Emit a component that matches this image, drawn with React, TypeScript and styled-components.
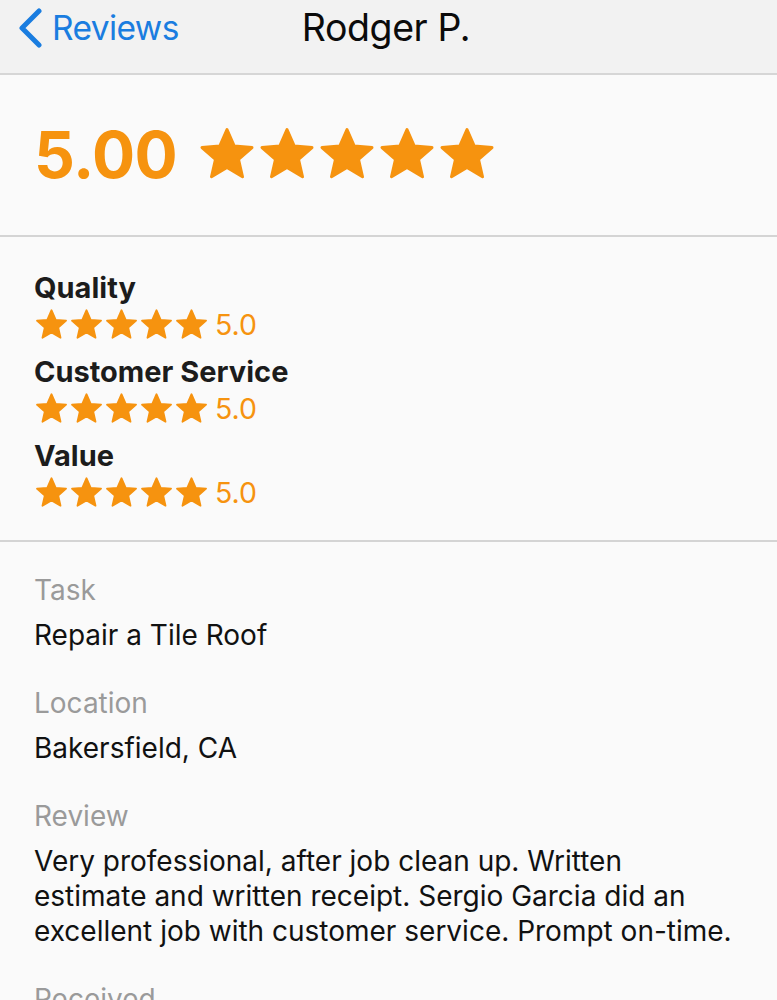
import styled, { createGlobalStyle } from "styled-components";

const Global = createGlobalStyle`
  html, body {
    margin: 0;
    padding: 0;
    background: #fafafa;
    font-family: "Inter", "Liberation Sans", sans-serif;
  }
`;

const ORANGE = "#f6930f";

const Page = styled.div`
  width: 777px;
  height: 1000px;
  overflow: hidden;
  background: #fafafa;
`;

const NavBar = styled.div`
  height: 73px;
  background: #f2f2f2;
  border-bottom: 2px solid #d6d6d6;
  display: flex;
  align-items: center;
`;

const Back = styled.div`
  display: flex;
  align-items: center;
  gap: 9px;
  padding-left: 17px;
  padding-bottom: 18px;
  color: #1a7de0;
  font-size: 33.5px;
  letter-spacing: -0.6px;
`;

const Title = styled.div`
  margin-left: 123px;
  padding-bottom: 18px;
  font-size: 37.5px;
  color: #0b0b0b;
  letter-spacing: -0.4px;
`;

const Section = styled.div<{ $pad: string }>`
  padding: ${(p) => p.$pad};
  border-bottom: 2px solid #d4d4d4;
`;

const Overall = styled.div`
  display: flex;
  align-items: center;
  gap: 20px;
  height: 60px;
`;

const BigScore = styled.div`
  font-size: 64px;
  font-weight: 700;
  color: ${ORANGE};
  letter-spacing: -0.5px;
`;

const Stars = styled.div<{ $gap: number }>`
  display: flex;
  align-items: center;
  gap: ${(p) => p.$gap}px;
`;

const Group = styled.div`
  display: flex;
  flex-direction: column;
  height: 84px;
`;

const CatLabel = styled.div`
  font-size: 29px;
  font-weight: 700;
  color: #1c1c1c;
  line-height: 36px;
`;

const CatRow = styled.div`
  display: flex;
  align-items: center;
  gap: 6px;
  margin-top: 1px;
`;

const CatScore = styled.span`
  font-size: 28.5px;
  color: ${ORANGE};
`;

const Details = styled.div`
  padding: 29px 35px 0 34px;
`;

const Field = styled.div`
  margin-bottom: 31px;
`;

const FieldLabel = styled.div`
  font-size: 28px;
  color: #9a9a9a;
  line-height: 38px;
`;

const FieldValue = styled.div`
  font-size: 28px;
  color: #111;
  line-height: 35px;
  margin-top: 9px;
  max-width: 705px;
`;

function Star({ size }: { size: number }) {
  return (
    <svg width={size} height={size} viewBox="0 0 24 24">
      <path
        d="M12 2.2l2.9 6.6 7.1.6-5.4 4.7 1.6 7-6.2-3.7-6.2 3.7 1.6-7L2 9.4l7.1-.6z"
        fill={ORANGE}
        stroke={ORANGE}
        strokeWidth={1.2}
        strokeLinejoin="round"
      />
    </svg>
  );
}

function StarRow({ size, gap }: { size: number; gap: number }) {
  return (
    <Stars $gap={gap}>
      {[0, 1, 2, 3, 4].map((i) => (
        <Star key={i} size={size} />
      ))}
    </Stars>
  );
}

const categories = ["Quality", "Customer Service", "Value"];

export default function App() {
  return (
    <Page>
      <Global />
      <NavBar>
        <Back>
          <svg width="26" height="40" viewBox="0 0 26 40">
            <path
              d="M22 3 L5 20 L22 37"
              fill="none"
              stroke="#1a7de0"
              strokeWidth="5"
              strokeLinecap="round"
              strokeLinejoin="round"
            />
          </svg>
          Reviews
        </Back>
        <Title>Rodger P.</Title>
      </NavBar>

      <Section $pad="49px 0 51px 34px">
        <Overall>
          <BigScore>5.00</BigScore>
          <StarRow size={60} gap={-1} />
        </Overall>
      </Section>

      <Section $pad="33px 0 18px 34px">
        {categories.map((c) => (
          <Group key={c}>
            <CatLabel>{c}</CatLabel>
            <CatRow>
              <StarRow size={35} gap={0} />
              <CatScore>5.0</CatScore>
            </CatRow>
          </Group>
        ))}
      </Section>

      <Details>
        <Field>
          <FieldLabel>Task</FieldLabel>
          <FieldValue>Repair a Tile Roof</FieldValue>
        </Field>
        <Field>
          <FieldLabel>Location</FieldLabel>
          <FieldValue>Bakersfield, CA</FieldValue>
        </Field>
        <Field>
          <FieldLabel>Review</FieldLabel>
          <FieldValue>
            Very professional, after job clean up. Written estimate and written
            receipt. Sergio Garcia did an excellent job with customer service.
            Prompt on-time.
          </FieldValue>
        </Field>
        <Field>
          <FieldLabel>Received</FieldLabel>
        </Field>
      </Details>
    </Page>
  );
}
